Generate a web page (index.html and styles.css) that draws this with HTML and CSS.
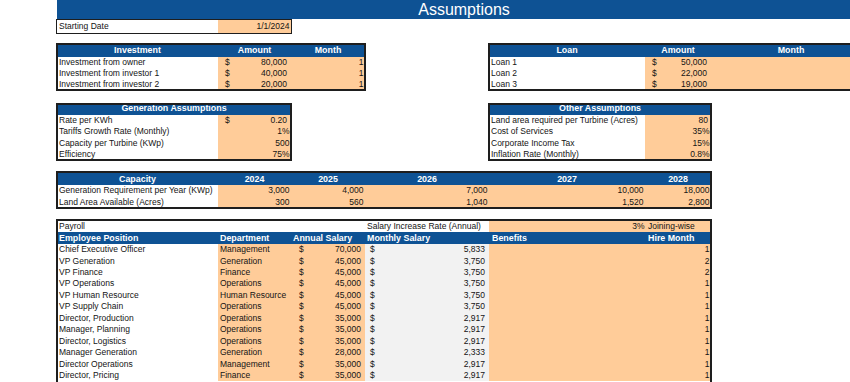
FILE: index.html
```html
<!DOCTYPE html>
<html>
<head>
<meta charset="utf-8">
<title>Assumptions</title>
<link rel="stylesheet" href="styles.css">
</head>
<body>
<div class="sheet">
  <div class="title">Assumptions</div>

  <div class="band band-start">
    <div class="tbl t-ab rows-start">
      <div class="c">Starting Date</div>
      <div class="c in r">1/1/2024</div>
    </div>
  </div>

  <div class="band band-inv">
    <div class="tbl t-abc rows-inv">
      <div class="c h ctr">Investment</div>
      <div class="c h ctr">Amount</div>
      <div class="c h ctr">Month</div>

      <div class="c">Investment from owner</div>
      <div class="c in m"><span>$</span><span>80,000</span></div>
      <div class="c in r">1</div>

      <div class="c">Investment from investor 1</div>
      <div class="c in m"><span>$</span><span>40,000</span></div>
      <div class="c in r">1</div>

      <div class="c">Investment from investor 2</div>
      <div class="c in m"><span>$</span><span>20,000</span></div>
      <div class="c in r">1</div>
    </div>

    <div class="tbl t-efg rows-inv">
      <div class="c h ctr">Loan</div>
      <div class="c h ctr">Amount</div>
      <div class="c h ctr">Month</div>

      <div class="c">Loan 1</div>
      <div class="c in m"><span>$</span><span>50,000</span></div>
      <div class="c in r"></div>

      <div class="c">Loan 2</div>
      <div class="c in m"><span>$</span><span>22,000</span></div>
      <div class="c in r"></div>

      <div class="c">Loan 3</div>
      <div class="c in m"><span>$</span><span>19,000</span></div>
      <div class="c in r"></div>
    </div>
  </div>

  <div class="band band-gen">
    <div class="tbl t-ab rows-gen">
      <div class="c h ctr span">Generation Assumptions</div>

      <div class="c">Rate per KWh</div>
      <div class="c in m"><span>$</span><span>0.20</span></div>

      <div class="c">Tariffs Growth Rate (Monthly)</div>
      <div class="c in r">1%</div>

      <div class="c">Capacity per Turbine (KWp)</div>
      <div class="c in r">500</div>

      <div class="c">Efficiency</div>
      <div class="c in r">75%</div>
    </div>

    <div class="tbl t-ef rows-gen">
      <div class="c h ctr span">Other Assumptions</div>

      <div class="c">Land area required per Turbine (Acres)</div>
      <div class="c in r n">80</div>

      <div class="c">Cost of Services</div>
      <div class="c in r">35%</div>

      <div class="c">Corporate Income Tax</div>
      <div class="c in r">15%</div>

      <div class="c">Inflation Rate (Monthly)</div>
      <div class="c in r">0.8%</div>
    </div>
  </div>

  <div class="band band-cap">
    <div class="tbl t-af rows-cap">
      <div class="c h ctr">Capacity</div>
      <div class="c h ctr">2024</div>
      <div class="c h ctr">2025</div>
      <div class="c h ctr">2026</div>
      <div class="c h ctr">2027</div>
      <div class="c h ctr">2028</div>

      <div class="c">Generation Requirement per Year (KWp)</div>
      <div class="c in r">3,000</div>
      <div class="c in r">4,000</div>
      <div class="c in r">7,000</div>
      <div class="c in r">10,000</div>
      <div class="c in r">18,000</div>

      <div class="c">Land Area Available (Acres)</div>
      <div class="c in r">300</div>
      <div class="c in r">560</div>
      <div class="c in r">1,040</div>
      <div class="c in r">1,520</div>
      <div class="c in r">2,800</div>
    </div>
  </div>

  <div class="band band-pay">
    <div class="tbl t-af rows-pay">
      <div class="c">Payroll</div>
      <div class="c"></div>
      <div class="c"></div>
      <div class="c">Salary Increase Rate (Annual)</div>
      <div class="c in r e-pct">3%</div>
      <div class="c in f-txt">Joining-wise</div>

      <div class="c h">Employee Position</div>
      <div class="c h">Department</div>
      <div class="c h">Annual Salary</div>
      <div class="c h">Monthly Salary</div>
      <div class="c h e-h">Benefits</div>
      <div class="c h f-txt">Hire Month</div>

      <div class="c">Chief Executive Officer</div>
      <div class="c in">Management</div>
      <div class="c in m mc"><span>$</span><span>70,000</span></div>
      <div class="c gr m md"><span>$</span><span>5,833</span></div>
      <div class="c in"></div>
      <div class="c in r">1</div>

      <div class="c">VP Generation</div>
      <div class="c in">Generation</div>
      <div class="c in m mc"><span>$</span><span>45,000</span></div>
      <div class="c gr m md"><span>$</span><span>3,750</span></div>
      <div class="c in"></div>
      <div class="c in r">2</div>

      <div class="c">VP Finance</div>
      <div class="c in">Finance</div>
      <div class="c in m mc"><span>$</span><span>45,000</span></div>
      <div class="c gr m md"><span>$</span><span>3,750</span></div>
      <div class="c in"></div>
      <div class="c in r">2</div>

      <div class="c">VP Operations</div>
      <div class="c in">Operations</div>
      <div class="c in m mc"><span>$</span><span>45,000</span></div>
      <div class="c gr m md"><span>$</span><span>3,750</span></div>
      <div class="c in"></div>
      <div class="c in r">1</div>

      <div class="c">VP Human Resource</div>
      <div class="c in">Human Resource</div>
      <div class="c in m mc"><span>$</span><span>45,000</span></div>
      <div class="c gr m md"><span>$</span><span>3,750</span></div>
      <div class="c in"></div>
      <div class="c in r">1</div>

      <div class="c">VP Supply Chain</div>
      <div class="c in">Operations</div>
      <div class="c in m mc"><span>$</span><span>45,000</span></div>
      <div class="c gr m md"><span>$</span><span>3,750</span></div>
      <div class="c in"></div>
      <div class="c in r">1</div>

      <div class="c">Director, Production</div>
      <div class="c in">Operations</div>
      <div class="c in m mc"><span>$</span><span>35,000</span></div>
      <div class="c gr m md"><span>$</span><span>2,917</span></div>
      <div class="c in"></div>
      <div class="c in r">1</div>

      <div class="c">Manager, Planning</div>
      <div class="c in">Operations</div>
      <div class="c in m mc"><span>$</span><span>35,000</span></div>
      <div class="c gr m md"><span>$</span><span>2,917</span></div>
      <div class="c in"></div>
      <div class="c in r">1</div>

      <div class="c">Director, Logistics</div>
      <div class="c in">Operations</div>
      <div class="c in m mc"><span>$</span><span>35,000</span></div>
      <div class="c gr m md"><span>$</span><span>2,917</span></div>
      <div class="c in"></div>
      <div class="c in r">1</div>

      <div class="c">Manager Generation</div>
      <div class="c in">Generation</div>
      <div class="c in m mc"><span>$</span><span>28,000</span></div>
      <div class="c gr m md"><span>$</span><span>2,333</span></div>
      <div class="c in"></div>
      <div class="c in r">1</div>

      <div class="c">Director Operations</div>
      <div class="c in">Management</div>
      <div class="c in m mc"><span>$</span><span>35,000</span></div>
      <div class="c gr m md"><span>$</span><span>2,917</span></div>
      <div class="c in"></div>
      <div class="c in r">1</div>

      <div class="c">Director, Pricing</div>
      <div class="c in">Finance</div>
      <div class="c in m mc"><span>$</span><span>35,000</span></div>
      <div class="c gr m md"><span>$</span><span>2,917</span></div>
      <div class="c in"></div>
      <div class="c in r">1</div>
    </div>
  </div>
</div>
</body>
</html>
```

FILE: styles.css
```css
html, body {
  margin: 0;
  padding: 0;
  overflow: hidden;
  background: #ffffff;
}

body {
  font-family: "Liberation Sans", Arial, sans-serif;
  font-size: 8.5px;
  color: #141414;
}

.sheet {
  width: 814px;
  margin-left: 57px;
  display: flex;
  flex-direction: column;
}

.title {
  height: 19px;
  line-height: 19px;
  background: #0e5294;
  color: #ffffff;
  font-size: 16px;
  text-align: center;
}

.band {
  display: grid;
  grid-template-columns: 161px 73px 74px 124px 156px 66px 160px;
}

.band-start { margin-top: 0.5px; }
.band-inv { margin-top: 11px; }
.band-gen { margin-top: 13.9px; }
.band-cap { margin-top: 11.9px; }
.band-pay { margin-top: 11.8px; }

.tbl {
  display: grid;
  outline: 2px solid #1e1e1e;
  outline-offset: -1px;
  position: relative;
}

.t-ab { grid-column: 1 / 3; grid-template-columns: 161px 73px; }
.t-abc { grid-column: 1 / 4; grid-template-columns: 161px 73px 74px; }
.t-efg { grid-column: 5 / 8; grid-template-columns: 156px 66px 160px; }
.t-ef { grid-column: 5 / 7; grid-template-columns: 156px 66px; }
.t-af { grid-column: 1 / 7; grid-template-columns: 161px 73px 74px 124px 156px 66px; }

.band-start .tbl { outline-width: 1.5px; outline-offset: -0.75px; }

.rows-start { grid-template-rows: 13px; }
.rows-inv { grid-template-rows: 13px repeat(3, 11.3px); }
.rows-gen { grid-template-rows: 10.5px repeat(4, 11.4px); }
.rows-cap { grid-template-rows: 13px repeat(2, 11.3px); }
.rows-pay {
  grid-template-rows: 12.8px 11.6px repeat(12, 11.45px);
  padding-bottom: 20px;
}

.c {
  display: flex;
  align-items: flex-end;
  line-height: 11.3px;
  padding: 0 2px;
  white-space: nowrap;
  min-width: 0;
}

.h {
  background: #0e5294;
  color: #ffffff;
  font-weight: bold;
  font-size: 8.9px;
}

.span { grid-column: 1 / -1; }

.ctr { justify-content: center; }
.r { justify-content: flex-end; padding-right: 1.5px; }
.n { padding-right: 3px; }

.in { background: #ffcc99; }
.gr { background: #f2f2f2; }

.m {
  justify-content: space-between;
  padding-left: 7px;
  padding-right: 4px;
}
.mc { padding-left: 8px; }
.md { padding-left: 5px; }

.e-pct { padding-right: 0.5px; }
.e-h { padding-left: 3px; }
.f-txt { padding-left: 3px; }
```
